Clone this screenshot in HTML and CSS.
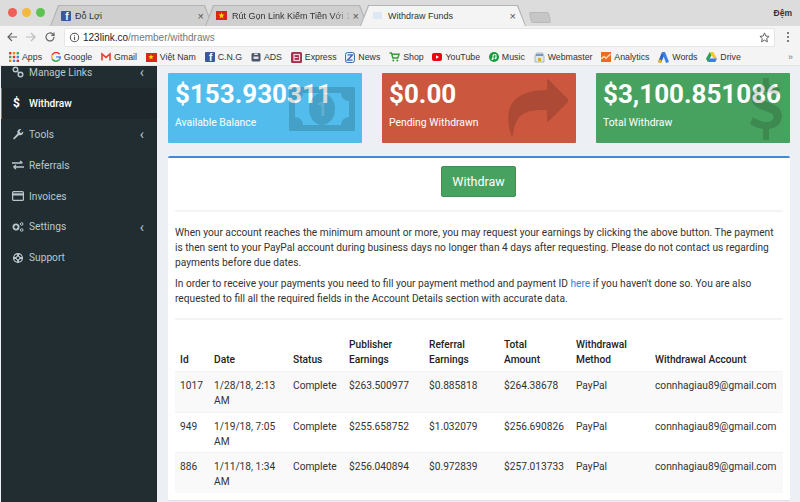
FILE: index.html
```html
<!DOCTYPE html>
<html lang="en">
<head>
<meta charset="utf-8">
<title>Withdraw Funds</title>
<link rel="stylesheet" href="styles.css">
</head>
<body>
<div class="tabstrip">
  <div class="lights"><i class="l-red"></i><i class="l-yellow"></i><i class="l-green"></i></div>
  <div class="tab tab-one"><span class="fav fb">f</span><span class="tab-title">Đỗ Lợi</span><span class="x">×</span></div>
  <div class="tab tab-two"><span class="fav flag"><svg viewBox="0 0 12 10" width="11" height="9"><polygon points="6,1.5 6.9,4 9.4,4 7.4,5.6 8.1,8.2 6,6.6 3.9,8.2 4.6,5.6 2.6,4 5.1,4" fill="#fd0"/></svg></span><span class="tab-title fade">Rút Gọn Link Kiếm Tiền Với 123</span><span class="x">×</span></div>
  <div class="tab tab-three"><span class="fav cash"></span><span class="tab-title">Withdraw Funds</span><span class="x">×</span></div>
  <div class="newtab"></div>
  <div class="profile">Đệm</div>
</div>
<div class="toolbar">
  <svg class="nav" viewBox="0 0 12 12" width="12" height="12"><path d="M11 6H2M6 2L2 6l4 4" fill="none" stroke="#666" stroke-width="1.2"/></svg>
  <svg class="nav" viewBox="0 0 12 12" width="12" height="12"><path d="M1 6h9M6 2l4 4-4 4" fill="none" stroke="#bbb" stroke-width="1.2"/></svg>
  <svg class="nav" viewBox="0 0 12 12" width="12" height="12"><path d="M10 6a4 4 0 1 1-1.2-2.9L10 4.3V1.5M10 4.3H7.3" fill="none" stroke="#666" stroke-width="1.2"/></svg>
  <div class="omnibox">
    <svg viewBox="0 0 12 12" width="11" height="11"><circle cx="6" cy="6" r="4.6" fill="none" stroke="#555" stroke-width="1.1"/><path d="M6 5.2v3.4M6 3.2v1" stroke="#555" stroke-width="1.2"/></svg>
    <span class="url"><b>123link.co</b>/member/withdraws</span>
    <svg class="star" viewBox="0 0 12 12" width="11" height="11"><polygon points="6,1 7.5,4.4 11,4.8 8.4,7.1 9.2,10.7 6,8.9 2.8,10.7 3.6,7.1 1,4.8 4.5,4.4" fill="none" stroke="#555" stroke-width="1"/></svg>
  </div>
  <div class="menu-dots"><i></i><i></i><i></i></div>
</div>
<div class="bookmarks">
  <span class="bm"><svg viewBox="0 0 10 10" width="10" height="10"><g><rect x="0" y="0" width="2.4" height="2.4" fill="#d33"/><rect x="3.8" y="0" width="2.4" height="2.4" fill="#e80"/><rect x="7.6" y="0" width="2.4" height="2.4" fill="#3a5"/><rect x="0" y="3.8" width="2.4" height="2.4" fill="#3a5"/><rect x="3.8" y="3.8" width="2.4" height="2.4" fill="#d33"/><rect x="7.6" y="3.8" width="2.4" height="2.4" fill="#48d"/><rect x="0" y="7.6" width="2.4" height="2.4" fill="#e80"/><rect x="3.8" y="7.6" width="2.4" height="2.4" fill="#48d"/><rect x="7.6" y="7.6" width="2.4" height="2.4" fill="#d33"/></g></svg>Apps</span>
  <span class="bm"><svg viewBox="0 0 10 10" width="10" height="10"><path d="M8.6 2.2A4.4 4.4 0 0 0 1.2 3" fill="none" stroke="#e33" stroke-width="1.5"/><path d="M1.2 3a4.4 4.4 0 0 0 0 4" fill="none" stroke="#fb0" stroke-width="1.5"/><path d="M1.2 7a4.4 4.4 0 0 0 7 .8" fill="none" stroke="#3a5" stroke-width="1.5"/><path d="M8.2 7.8A4.4 4.4 0 0 0 9.3 5H5.2" fill="none" stroke="#48e" stroke-width="1.5"/></svg>Google</span>
  <span class="bm"><svg viewBox="0 0 10 10" width="10" height="10"><path d="M1 8.500V2l4 3.400L9 2v6.500" fill="none" stroke="#d43" stroke-width="1.600"/></svg>Gmail</span>
  <span class="bm"><span class="fav flag"><svg viewBox="0 0 12 10" width="10" height="8"><polygon points="6,1.500 6.900,4 9.400,4 7.400,5.600 8.100,8.200 6,6.600 3.900,8.200 4.600,5.600 2.600,4 5.100,4" fill="#fd0"/></svg></span>Việt Nam</span>
  <span class="bm"><span class="fav fb">f</span>C.N.G</span>
  <span class="bm"><svg viewBox="0 0 10 10" width="10" height="10"><rect x=".5" y="1" width="9" height="8.500" rx="1.500" fill="#4a5668"/><rect x="2.500" y="4.500" width="5" height="2.500" fill="#dde"/><rect x="3" y="1.500" width="4" height="1.500" fill="#dde"/></svg>ADS</span>
  <span class="bm"><svg viewBox="0 0 11 11" width="11" height="11"><rect width="11" height="11" rx="1.500" fill="#a3324f"/><rect x="3" y="2.500" width="5.500" height="6" fill="none" stroke="#f3d8de" stroke-width="1.200"/><path d="M3 5.500h4" stroke="#f3d8de"/></svg>Express</span>
  <span class="bm"><svg viewBox="0 0 10 11" width="10" height="11"><rect x=".5" y=".5" width="9" height="10" rx="2" fill="#e8eef8" stroke="#3d6fb0"/><path d="M2.500 2.800h5L2.500 8.200h5" fill="none" stroke="#3d6fb0" stroke-width="1.300"/></svg>News</span>
  <span class="bm"><svg viewBox="0 0 11 10" width="11" height="10"><path d="M.5 1h2l1.300 5h5l1.300-3.800H3" fill="none" stroke="#3a9a3a" stroke-width="1.400"/><circle cx="4.300" cy="8.500" r="1" fill="#3a9a3a"/><circle cx="8.300" cy="8.500" r="1" fill="#3a9a3a"/></svg>Shop</span>
  <span class="bm"><svg viewBox="0 0 10 8" width="10" height="8"><rect width="10" height="8" rx="2" fill="#e01"/><polygon points="4,2.200 7,4 4,5.800" fill="#fff"/></svg>YouTube</span>
  <span class="bm"><svg viewBox="0 0 10 10" width="10" height="10"><circle cx="5" cy="5" r="5" fill="#1a9a3c"/><path d="M4 7V3l3-.5v3.700" fill="none" stroke="#fff"/><circle cx="3.500" cy="7" r="1" fill="#fff"/><circle cx="6.500" cy="6.200" r="1" fill="#fff"/></svg>Music</span>
  <span class="bm"><svg viewBox="0 0 11 11" width="11" height="11"><path d="M1 4l1.500-3h6L10 4v6H1z" fill="#dfe6ef" stroke="#9aa8b8" stroke-width=".8"/><rect x="2" y="2" width="7" height="2" fill="#7d97c0"/><rect x="4" y="6" width="3" height="3" fill="#e2a33a"/></svg>Webmaster</span>
  <span class="bm"><svg viewBox="0 0 10 10" width="10" height="10"><rect width="10" height="10" fill="#ee6a1e"/><path d="M0 7l3-2.500 2 1.800L9.500 2" fill="none" stroke="#ffe0b0" stroke-width="1.400"/></svg>Analytics</span>
  <span class="bm"><svg viewBox="0 0 11 11" width="11" height="11"><polygon points="4,0 7,0 11,10 8,11" fill="#3b7fe0"/><polygon points="4,0 6,4 3,11 0,10" fill="#2f69c4"/><circle cx="2" cy="9.300" r="1.700" fill="#f7b500"/></svg>Words</span>
  <span class="bm"><svg viewBox="0 0 11 10" width="11" height="10"><polygon points="3.700,0 7.300,0 11,6.500 7.500,6.500" fill="#f7c631"/><polygon points="3.700,0 5.500,3.300 1.800,10 0,6.800" fill="#2aa14d"/><polygon points="3.500,6.500 11,6.500 9.200,10 1.800,10" fill="#3d7de4"/></svg>Drive</span>
  <span class="more">»</span>
</div>
<div class="app">
  <aside class="sidebar">
    <ul class="menu">
      <li class="item"><svg class="ic" viewBox="0 0 12 12" width="12" height="12"><circle cx="3.500" cy="3.500" r="2.300" fill="none" stroke="#b8c7ce" stroke-width="1.400"/><circle cx="8.500" cy="8.500" r="2.300" fill="none" stroke="#b8c7ce" stroke-width="1.400"/><path d="M5 5l2 2" stroke="#b8c7ce" stroke-width="1.400"/></svg><span class="lbl">Manage Links</span><span class="chev">‹</span></li>
      <li class="item active"><span class="ic dollar">$</span><span class="lbl">Withdraw</span></li>
      <li class="item"><svg class="ic" viewBox="0 0 12 12" width="12" height="12"><path d="M1 10.500l4.600-5A3 3 0 0 1 9.300 1.300L7.500 3l.4 1.500 1.500.4 1.700-1.700a3 3 0 0 1-4.100 3.700L2.200 11.500z" fill="#b8c7ce"/></svg><span class="lbl">Tools</span><span class="chev">‹</span></li>
      <li class="item"><svg class="ic" viewBox="0 0 12 12" width="12" height="12"><path d="M0 4h10M8 2l2.500 2M12 8H2M4 6L1.500 8M4 10L1.500 8" fill="none" stroke="#b8c7ce" stroke-width="1.300"/></svg><span class="lbl">Referrals</span></li>
      <li class="item"><svg class="ic" viewBox="0 0 12 12" width="12" height="12"><rect x=".6" y="1.600" width="10.800" height="8.800" rx="1" fill="none" stroke="#b8c7ce" stroke-width="1.200"/><rect x="1" y="3.300" width="10" height="2.200" fill="#b8c7ce"/></svg><span class="lbl">Invoices</span></li>
      <li class="item"><svg class="ic" viewBox="0 0 12 12" width="12" height="12"><circle cx="4" cy="6" r="2.600" fill="none" stroke="#b8c7ce" stroke-width="1.800"/><circle cx="9.700" cy="3" r="1.300" fill="none" stroke="#b8c7ce"/><circle cx="9.700" cy="9" r="1.300" fill="none" stroke="#b8c7ce"/></svg><span class="lbl">Settings</span><span class="chev">‹</span></li>
      <li class="item"><svg class="ic" viewBox="0 0 12 12" width="12" height="12"><circle cx="6" cy="6" r="4.400" fill="none" stroke="#b8c7ce" stroke-width="1.300"/><circle cx="6" cy="6" r="2" fill="none" stroke="#b8c7ce" stroke-width="1"/><path d="M6 1.500v3M6 7.500v3M1.500 6h3M7.500 6h3" stroke="#b8c7ce" stroke-width="2"/></svg><span class="lbl">Support</span></li>
    </ul>
  </aside>
  <main class="content">
    <section class="boxes">
      <div class="box blue">
        <div class="amount">$153.930311</div><div class="cap">Available Balance</div>
        <svg class="box-ic" viewBox="0 0 66 44" width="66" height="44"><path fill-rule="evenodd" d="M1 0h64a1 1 0 0 1 1 1v42a1 1 0 0 1-1 1H1a1 1 0 0 1-1-1V1a1 1 0 0 1 1-1zM14 6a8 8 0 0 1-8 8v16a8 8 0 0 1 8 8h38a8 8 0 0 1 8-8V14a8 8 0 0 1-8-8z" fill="#000" fill-opacity=".15"/><ellipse cx="33" cy="22" rx="13" ry="16" fill="#000" fill-opacity=".15"/><text x="33" y="29" text-anchor="middle" class="note">1</text></svg>
      </div>
      <div class="box red">
        <div class="amount">$0.00</div><div class="cap">Pending Withdrawn</div>
        <svg class="box-ic share" viewBox="0 0 62 58" width="62" height="58"><path d="M41 1c0-1 1-1 2 0l19 19c1 1 1 2 0 3L43 42c-1 1-2 .500-2-1V31C22 31 10 32 7 56c0 1-2 1-2 0C-3 30 5 11 41 11z" fill="#000" fill-opacity=".15"/></svg>
      </div>
      <div class="box green">
        <div class="amount">$3,100.851086</div><div class="cap">Total Withdraw</div>
        <svg class="box-ic dollar-ic" viewBox="0 0 32 62" width="32" height="62"><path d="M13 0h6v7c4 .500 8 2 11 4l-3 7c-4-2.500-8-4-12-4-4 0-6 1.500-6 4 0 7 23 5 23 20 0 7-5 12-13 13v11h-6V51c-5-.500-9-2.500-13-5l3-7c4 3 9 5 13.500 5s7-2 7-5C24 32 1 34 1 19 1 12 6 8 13 7z" fill="#000" fill-opacity=".15"/></svg>
      </div>
    </section>
    <section class="card">
      <div class="btn-row"><a class="btn">Withdraw</a></div>
      <hr class="rule rule-top">
      <p class="para">When your account reaches the minimum amount or more, you may request your earnings by clicking the above button. The payment is then sent to your PayPal account during business days no longer than 4 days after requesting. Please do not contact us regarding payments before due dates.</p>
      <p class="para">In order to receive your payments you need to fill your payment method and payment ID <a class="link">here</a> if you haven't done so. You are also requested to fill all the required fields in the Account Details section with accurate data.</p>
      <hr class="rule">
      <table class="table">
        <colgroup><col class="c1"><col class="c2"><col class="c3"><col class="c4"><col class="c5"><col class="c6"><col class="c7"><col class="c8"></colgroup>
        <thead><tr><th>Id</th><th>Date</th><th>Status</th><th>Publisher Earnings</th><th>Referral Earnings</th><th>Total Amount</th><th>Withdrawal Method</th><th>Withdrawal Account</th></tr></thead>
        <tbody>
          <tr><td>1017</td><td>1/28/18, 2:13 AM</td><td>Complete</td><td>$263.500977</td><td>$0.885818</td><td>$264.38678</td><td>PayPal</td><td>connhagiau89@gmail.com</td></tr>
          <tr><td>949</td><td>1/19/18, 7:05 AM</td><td>Complete</td><td>$255.658752</td><td>$1.032079</td><td>$256.690826</td><td>PayPal</td><td>connhagiau89@gmail.com</td></tr>
          <tr><td>886</td><td>1/11/18, 1:34 AM</td><td>Complete</td><td>$256.040894</td><td>$0.972839</td><td>$257.013733</td><td>PayPal</td><td>connhagiau89@gmail.com</td></tr>
        </tbody>
      </table>
    </section>
  </main>
</div>
</body>
</html>
```

FILE: styles.css
```css
* { box-sizing: border-box; }
html, body { margin: 0; padding: 0; height: 502px; width: 800px; overflow: hidden; }
body { font-family: Roboto, "Liberation Sans", sans-serif; background: #ecf0f5; color: #333; display: flex; flex-direction: column; }

.tabstrip { height: 26px; flex: none; background: #dcdcdc; display: flex; align-items: flex-end; font-family: "Liberation Sans", Arial, sans-serif; font-size: 9px; color: #333; }
.lights { display: flex; gap: 5px; width: 50px; flex: none; align-self: flex-start; padding: 8px 0 0 8px; }
.lights i { width: 9px; height: 9px; border-radius: 50%; display: block; }
.l-red { background: #ed5f57; }
.l-yellow { background: #f2b93f; }
.l-green { background: #5dc350; }
.tab { height: 21px; display: flex; align-items: center; padding: 0 9px 0 11px; background: #b4b4b4; clip-path: polygon(0 100%, 8px 0, calc(100% - 8px) 0, 100% 100%); margin-right: -8px; flex: none; position: relative; }
.tab::before { content: ""; position: absolute; inset: 1px 1px 0 1px; background: #cfcfcf; clip-path: polygon(0 100%, 8px 0, calc(100% - 8px) 0, 100% 100%); }
.tab > * { position: relative; }
.tab-one { width: 163px; }
.tab-two { width: 163px; }
.tab-three { width: 166px; padding-left: 13px; padding-right: 10px; }
.tab-three::before { background: #f4f4f4; }
.tab-title { flex: 1; margin-left: 4px; white-space: nowrap; overflow: hidden; }
.tab-two .tab-title { margin-left: 5px; }
.tab-three .tab-title { margin-left: 6px; }
.fade { -webkit-mask-image: linear-gradient(to right, #000 85%, transparent); mask-image: linear-gradient(to right, #000 85%, transparent); }
.x { font-size: 11px; color: #555; margin-left: 2px; }
.fav { display: inline-flex; align-items: center; justify-content: center; flex: none; width: 10px; height: 10px; }
.fb { background: #3b5998; color: #fff; font: bold 10px/10px "Liberation Sans", sans-serif; padding: 2px 0 0 2px; border-radius: 1px; }
.flag { background: #da251d; width: 11px; height: 9px; }
.cash { background: #dce8f4; width: 9px; height: 7px; }
.newtab { width: 20px; height: 11px; margin: 0 0 3px 12px; background: #c6c6c6; border: 1px solid #b8b8b8; border-radius: 2px; transform: skewX(12deg); flex: none; }
.profile { margin-left: auto; align-self: flex-start; padding: 8px 8px 0 0; font-size: 8.500px; font-weight: bold; color: #333; }

.toolbar { height: 22px; flex: none; background: #f4f4f4; display: flex; align-items: center; padding: 0 0 0 6px; gap: 7px; }
.omnibox { width: 711px; height: 19px; margin-left: 1px; background: #fff; border-radius: 2px; border: 1px solid #e6e6e6; display: flex; align-items: center; padding: 0 0 0 4px; gap: 3px; font: 10px "Liberation Sans", Arial, sans-serif; color: #777; }
.url b { color: #222; font-weight: normal; }
.star { margin-left: auto; margin-right: 4px; }
.menu-dots { display: flex; flex-direction: column; gap: 2px; margin-left: 5px; }
.menu-dots i { width: 2px; height: 2px; background: #555; border-radius: 50%; display: block; }

.bookmarks { height: 18px; flex: none; background: #f4f4f4; border-bottom: 1px solid #e2e2e2; display: flex; align-items: center; padding: 1px 0 0 9px; font: 8.800px "Liberation Sans", Arial, sans-serif; color: #333; gap: 8.800px; white-space: nowrap; }
.bm { display: inline-flex; align-items: center; gap: 3px; }
.more { margin-left: auto; margin-right: 7px; color: #777; }

.app { flex: 1; display: flex; min-height: 0; }
.sidebar { width: 156px; margin-left: 1px; flex: none; background: #222d32; overflow: hidden; }
.menu { list-style: none; margin: -9px 0 0; padding: 0; }
.item { height: 30.900px; display: flex; align-items: center; padding: 0 0 0 10px; border-left: 1px solid transparent; color: #b8c7ce; font-size: 10.200px; }
.item.active { background: #1e282c; color: #fff; border-left-color: #3c8dbc; font-weight: 500; }
.ic { width: 12px; flex: none; }
.dollar { font-size: 12px; font-weight: 700; text-align: left; color: #fff; padding-left: 1px; }
.lbl { margin-left: 5px; }
.chev { margin-left: auto; margin-right: 13px; font-size: 14px; line-height: 14px; }

.content { flex: 1; min-width: 0; padding: 7px 10px 0 11px; }
.boxes { display: flex; gap: 20px; }
.box { flex: 1; height: 70px; border-radius: 1px; color: #fff; padding: 3px 7px; position: relative; overflow: hidden; }
.blue { background: #52bdec; }
.red { background: #cc573f; }
.green { background: #48a25f; }
.amount { font-size: 26px; font-weight: 700; line-height: 36px; white-space: nowrap; color: #fff; }
.cap { font-size: 10.400px; line-height: 14px; margin-top: 4px; font-weight: 400; }
.box-ic { position: absolute; right: 7px; top: 14px; }
.note { font: 700 20px Roboto, sans-serif; fill: #fff; fill-opacity: .16; }
.share { right: 8px; top: 6px; }
.dollar-ic { right: 8px; top: 5px; }

.card { margin-top: 13px; background: #fff; border-top: 2px solid #3c8dd8; border-radius: 2px; height: 345px; padding: 8px 7px 0; overflow: hidden; border-bottom: 1px solid #dde; }
.btn-row { display: flex; justify-content: center; padding-right: 1px; }
.btn { width: 75px; height: 31px; background: #48a25f; border: 1px solid #3d9053; border-radius: 2px; color: #fff; font-size: 12.500px; display: flex; align-items: center; justify-content: center; }
.para { margin: 0 0 6px; font-size: 10.200px; line-height: 15px; color: #333; }
.link { color: #1e88e5; }
.rule { border: 0; border-top: 2px solid #f4f4f4; margin: 12px 0 0; }
.rule-top { margin: 13px 0 13px; }
.table { border-collapse: collapse; table-layout: fixed; width: 608px; font-size: 10.200px; line-height: 15px; margin-top: 12px; color: #333; }
.c1 { width: 34px; } .c2 { width: 79px; } .c3 { width: 56px; } .c4 { width: 80px; } .c5 { width: 75px; } .c6 { width: 72px; } .c7 { width: 79px; } .c8 { width: 133px; }
th { text-align: left; vertical-align: bottom; font-weight: 500; color: #222; padding: 5px 12px 4px 5px; }
td { vertical-align: top; padding: 6px 5px 3.500px; }
td:last-child, th:last-child { white-space: nowrap; }
tbody tr:nth-child(odd) { background: #f9f9f9; }
tbody tr { border-top: 1px solid #f2f2f2; }
```
